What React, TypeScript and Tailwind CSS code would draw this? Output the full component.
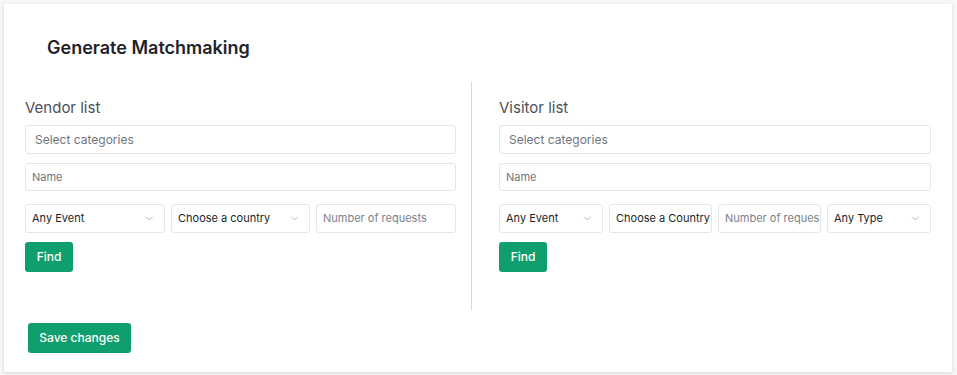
import { ChevronDown } from 'lucide-react';

const font = { fontFamily: 'Inter, "Noto Sans", sans-serif' };

function SelectBox({ label, chevron = true, className = '' }: { label: string; chevron?: boolean; className?: string }) {
  return (
    <div
      className={`flex h-[29px] items-center justify-between overflow-hidden whitespace-nowrap rounded-[3px] border border-[#e3e5e8] bg-white pl-[6px] pr-[9px] text-[11px] text-[#212529] ${className}`}
    >
      <span>{label}</span>
      {chevron && <ChevronDown size={11} strokeWidth={1.5} className="shrink-0 text-[#8a8f96]" />}
    </div>
  );
}

function TextBox({ placeholder, className = '' }: { placeholder: string; className?: string }) {
  return (
    <div
      className={`flex h-[29px] items-center overflow-hidden whitespace-nowrap rounded-[3px] border border-[#e3e5e8] bg-white px-[6px] text-[11px] text-[#7b818a] ${className}`}
    >
      {placeholder}
    </div>
  );
}

function ListColumn({ title, children }: { title: string; children: React.ReactNode }) {
  return (
    <div className="flex flex-col">
      <div className="mb-[5px] text-[15px] leading-6 text-[#4b5157]">{title}</div>
      <div className="flex h-[29px] items-center rounded-[3px] border border-[#e3e5e8] px-[9px] text-[12px] text-[#6f757d]">
        Select categories
      </div>
      <div className="mt-[9px] flex h-[28px] items-center rounded-[3px] border border-[#e3e5e8] px-[6px] text-[11px] text-[#6f757d]">
        Name
      </div>
      <div className="mt-[13px] flex gap-[6px]">{children}</div>
      <button className="mt-[9px] h-[30px] w-[48px] rounded-[3px] bg-[#0f9f6e] text-[12px] font-medium text-white">
        Find
      </button>
    </div>
  );
}

export default function App() {
  return (
    <div className="min-h-[375px] bg-[#f5f6f8] p-[4px]" style={font}>
      <div className="w-[948px] bg-white pb-[19px] pt-[30px] shadow-[0_1px_3px_rgba(0,0,0,0.12)]">
        <h1 className="pl-[43px] text-[18px] font-semibold leading-7 text-[#1f2328]">Generate Matchmaking</h1>

        <div className="mt-[20px] flex px-[21px]">
          <div className="w-[447px] border-r border-[#d6d8db] pb-[38px] pr-[15px] pt-[14px]">
            <ListColumn title="Vendor list">
              <SelectBox label="Any Event" className="w-[140px]" />
              <SelectBox label="Choose a country" className="w-[139px]" />
              <TextBox placeholder="Number of requests" className="flex-1" />
            </ListColumn>
          </div>
          <div className="flex-1 pl-[27px] pt-[14px]">
            <ListColumn title="Visitor list">
              <SelectBox label="Any Event" className="w-[104px]" />
              <SelectBox label="Choose a Country" chevron={false} className="w-[103px]" />
              <TextBox placeholder="Number of requests" className="w-[103px]" />
              <SelectBox label="Any Type" className="flex-1" />
            </ListColumn>
          </div>
        </div>

        <button className="ml-[24px] mt-[13px] h-[30px] w-[103px] rounded-[3px] bg-[#0f9f6e] text-[12px] font-medium text-white">
          Save changes
        </button>
      </div>
    </div>
  );
}
